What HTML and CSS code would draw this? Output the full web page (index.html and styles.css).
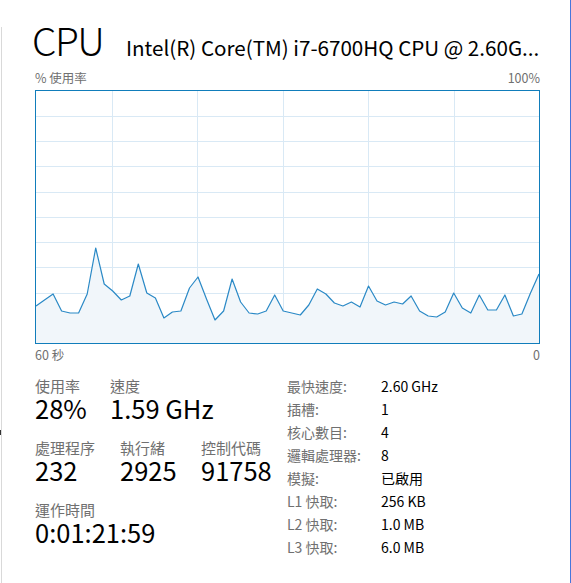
FILE: index.html
```html
<!DOCTYPE html>
<html lang="zh-Hant">
<head>
<meta charset="utf-8">
<title>CPU</title>
<link rel="stylesheet" href="styles.css">
</head>
<body>
<div class="window">
  <div class="rail"><span class="tick"></span></div>
  <main class="panel">
    <header class="head">
      <h1 class="title">CPU</h1>
      <div class="model">Intel(R) Core(TM) i7-6700HQ CPU @ 2.60G...</div>
    </header>
    <div class="axis axis-top"><span>% 使用率</span><span>100%</span></div>
    <div class="chart">
      <svg class="graph" width="503" height="252" viewBox="0 0 503 252">
        <g class="grid" shape-rendering="crispEdges">
          <line x1="0" y1="25.5" x2="503" y2="25.5"/>
          <line x1="0" y1="50.5" x2="503" y2="50.5"/>
          <line x1="0" y1="75.5" x2="503" y2="75.5"/>
          <line x1="0" y1="101.5" x2="503" y2="101.5"/>
          <line x1="0" y1="126.5" x2="503" y2="126.5"/>
          <line x1="0" y1="151.5" x2="503" y2="151.5"/>
          <line x1="0" y1="176.5" x2="503" y2="176.5"/>
          <line x1="0" y1="202.5" x2="503" y2="202.5"/>
          <line x1="0" y1="227.5" x2="503" y2="227.5"/>
          <line x1="76.5" y1="0" x2="76.5" y2="252"/>
          <line x1="161.5" y1="0" x2="161.5" y2="252"/>
          <line x1="247.5" y1="0" x2="247.5" y2="252"/>
          <line x1="332.5" y1="0" x2="332.5" y2="252"/>
          <line x1="418.5" y1="0" x2="418.5" y2="252"/>
        </g>
        <polygon class="area" points="0,215 8.5,209 17.1,203 25.6,220 34.1,222 42.6,222 51.2,203 59.7,157 68.2,193 76.7,200 85.3,209 93.8,205 102.3,173 110.8,202 119.4,207 127.9,227 136.4,221 144.9,220 153.5,197 162,186 170.5,208 179,229 187.6,220 196.1,188 204.6,211 213.1,222 221.7,223 230.2,220 238.7,204 247.2,220 255.8,222 264.3,224 272.8,214 281.3,198 289.9,203 298.4,212 306.9,215 315.4,211 324,216 332.5,195 341,210 349.5,214 358.1,211 366.6,213 375.1,205 383.6,220 392.2,225 400.7,226 409.2,221 417.7,202 426.3,217 434.8,222 443.3,204 451.8,219 460.4,219 468.9,204 477.4,225 485.9,223 494.5,202 503,183 503,252 0,252"/>
        <polyline class="line" points="0,215 8.5,209 17.1,203 25.6,220 34.1,222 42.6,222 51.2,203 59.7,157 68.2,193 76.7,200 85.3,209 93.8,205 102.3,173 110.8,202 119.4,207 127.9,227 136.4,221 144.9,220 153.5,197 162,186 170.5,208 179,229 187.6,220 196.1,188 204.6,211 213.1,222 221.7,223 230.2,220 238.7,204 247.2,220 255.8,222 264.3,224 272.8,214 281.3,198 289.9,203 298.4,212 306.9,215 315.4,211 324,216 332.5,195 341,210 349.5,214 358.1,211 366.6,213 375.1,205 383.6,220 392.2,225 400.7,226 409.2,221 417.7,202 426.3,217 434.8,222 443.3,204 451.8,219 460.4,219 468.9,204 477.4,225 485.9,223 494.5,202 503,183"/>
      </svg>
    </div>
    <div class="axis axis-bottom"><span>60 秒</span><span>0</span></div>
    <section class="stats">
      <div class="main-stats">
        <div class="row row-a">
          <div class="stat"><div class="label">使用率</div><div class="value">28%</div></div>
          <div class="stat"><div class="label">速度</div><div class="value">1.59 GHz</div></div>
        </div>
        <div class="row row-b">
          <div class="stat"><div class="label">處理程序</div><div class="value">232</div></div>
          <div class="stat"><div class="label">執行緒</div><div class="value">2925</div></div>
          <div class="stat"><div class="label">控制代碼</div><div class="value">91758</div></div>
        </div>
        <div class="row row-c">
          <div class="stat"><div class="label">運作時間</div><div class="value">0:01:21:59</div></div>
        </div>
      </div>
      <dl class="specs">
        <div class="spec"><dt>最快速度:</dt><dd>2.60 GHz</dd></div>
        <div class="spec"><dt>插槽:</dt><dd>1</dd></div>
        <div class="spec"><dt>核心數目:</dt><dd>4</dd></div>
        <div class="spec"><dt>邏輯處理器:</dt><dd>8</dd></div>
        <div class="spec"><dt>模擬:</dt><dd>已啟用</dd></div>
        <div class="spec"><dt>L1 快取:</dt><dd>256 KB</dd></div>
        <div class="spec"><dt>L2 快取:</dt><dd>1.0 MB</dd></div>
        <div class="spec"><dt>L3 快取:</dt><dd>6.0 MB</dd></div>
      </dl>
    </section>
  </main>
  <div class="edge"></div>
</div>
</body>
</html>
```

FILE: styles.css
```css
* { box-sizing: border-box; }
html, body {
  margin: 0;
  padding: 0;
  background: #ffffff;
}
body {
  width: 571px;
  height: 583px;
  overflow: hidden;
  font-family: "Noto Sans CJK TC", "Noto Sans", sans-serif;
  color: #000;
}
.window {
  display: flex;
  width: 571px;
  height: 583px;
}
.rail {
  position: relative;
  width: 1px;
  margin-left: 1px;
  margin-top: 27px;
  background: #d9d9d9;
}
.tick {
  position: absolute;
  left: -1px;
  top: 403px;
  width: 1px;
  height: 5px;
  background: #333;
}
.panel {
  flex: 1;
  padding: 0 30px 0 33px;
  min-width: 0;
}
.edge {
  width: 1px;
  background: #4676dc;
}
.head {
  display: flex;
  align-items: baseline;
  height: 70px;
  padding-top: 18px;
}
.title {
  margin: 0 0 0 -3px;
  font-size: 39px;
  line-height: 42px;
  font-weight: 300;
  letter-spacing: -1.5px;
  width: 94px;
  flex: none;
}
.model {
  font-size: 20.6px;
  white-space: nowrap;
  overflow: hidden;
}
.axis {
  display: flex;
  justify-content: space-between;
  width: 505px;
  font-size: 12.5px;
  line-height: 16px;
  color: #707070;
}
.axis-top {
  margin-bottom: 4px;
}
.axis-bottom {
  margin-top: 3px;
}
.chart {
  width: 505px;
  height: 254px;
  border: 1px solid #117dbb;
}
.graph { display: block; }
.grid line {
  stroke: #d9e9f5;
  stroke-width: 1;
}
.area {
  fill: #f1f6fa;
}
.line {
  fill: none;
  stroke: #2a89c6;
  stroke-width: 1.2;
  stroke-linejoin: round;
}
.stats {
  display: flex;
  margin-top: 12px;
}
.main-stats {
  width: 252px;
  padding-top: 2px;
}
.row {
  display: grid;
}
.row + .row { margin-top: 18px; }
.row-a { grid-template-columns: 75px auto; }
.row-b { grid-template-columns: 85px 81px auto; }
.label {
  font-size: 15px;
  line-height: 18px;
  color: #707070;
  white-space: nowrap;
}
.value {
  font-size: 25.5px;
  line-height: 26px;
  white-space: nowrap;
}
.specs {
  margin: 0;
  font-size: 14px;
}
.spec {
  display: flex;
  height: 23px;
  line-height: 23px;
}
.spec dt {
  width: 94px;
  color: #707070;
  white-space: nowrap;
}
.spec dd {
  margin: 0;
  white-space: nowrap;
}
```
